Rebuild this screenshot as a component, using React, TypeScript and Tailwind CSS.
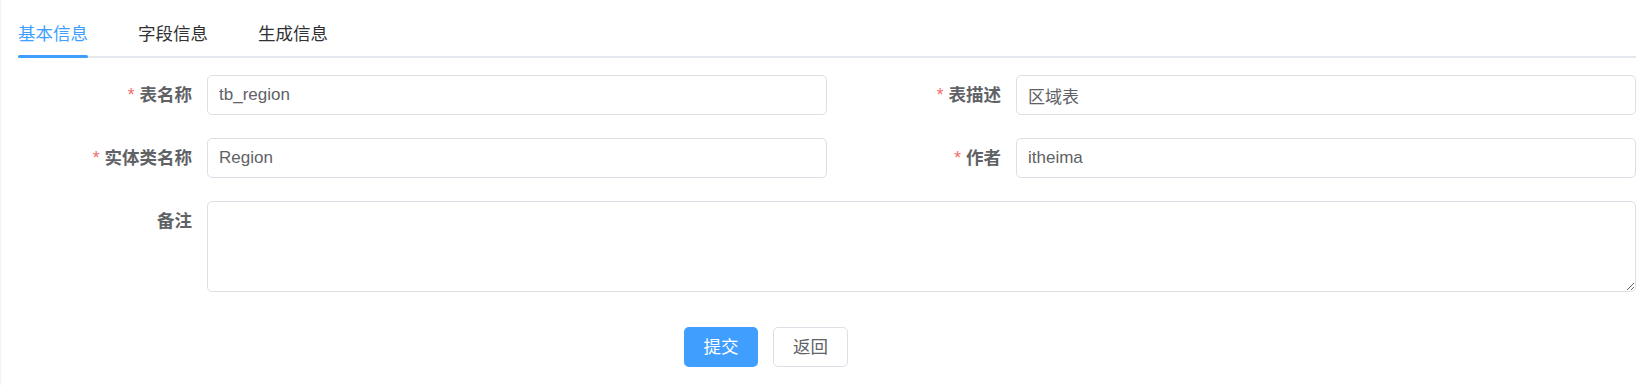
import React from "react";

export default function App() {
  const tabs = ["基本信息", "字段信息", "生成信息"];

  const Label = ({ text, required }: { text: string; required?: boolean }) => (
    <div className="w-[189px] shrink-0 pr-[15px] text-right leading-[40px] font-bold text-[#606266]">
      {required && <span className="mr-[5px] font-normal text-[#F56C6C]">*</span>}
      {text}
    </div>
  );

  const Field = ({ label, value }: { label: string; value: string }) => (
    <div className="flex items-start">
      <Label text={label} required />
      <input
        defaultValue={value}
        className="h-[40px] min-w-0 flex-1 rounded-[5px] border border-[#DCDFE6] bg-white px-[11px] text-[17px] text-[#606266] outline-none"
      />
    </div>
  );

  return (
    <div
      className="h-[385px] w-full border-l border-[#f2f2f2] bg-white pl-[17px] pr-[12px] text-[17.5px]"
      style={{ fontFamily: '"Liberation Sans", "Noto Sans CJK SC", sans-serif' }}
    >
      {/* Tabs header */}
      <div className="flex border-b-2 border-[#E4E7ED] pt-[12px]">
        {tabs.map((t, i) => (
          <div
            key={t}
            className={
              i === 0
                ? "relative flex h-[44px] items-center pr-[25px] text-[#409EFF]"
                : i === tabs.length - 1
                ? "relative flex h-[44px] items-center pl-[25px] text-[#303133]"
                : "relative flex h-[44px] items-center px-[25px] text-[#303133]"
            }
          >
            {t}
            {i === 0 && <div className="absolute bottom-[-2px] left-0 h-[3px] w-[70px] rounded-full bg-[#409EFF]" />}
          </div>
        ))}
      </div>

      {/* Form */}
      <div className="mt-[17px]">
        <div className="grid grid-cols-2">
          <Field label="表名称" value="tb_region" />
          <Field label="表描述" value="区域表" />
        </div>
        <div className="mt-[23px] grid grid-cols-2">
          <Field label="实体类名称" value="Region" />
          <Field label="作者" value="itheima" />
        </div>
        <div className="mt-[23px] flex items-start">
          <Label text="备注" />
          <textarea className="h-[91px] min-w-0 flex-1 resize-y rounded-[5px] border border-[#DCDFE6] bg-white px-[11px] py-[6px] text-[17px] text-[#606266] outline-none" />
        </div>
        <div className="mt-[35px] flex gap-[15px] pl-[666px]">
          <button className="h-[40px] w-[74px] rounded-[5px] bg-[#409EFF] text-[17.5px] text-white">提交</button>
          <button className="h-[40px] w-[75px] rounded-[5px] border border-[#DCDFE6] bg-white text-[17.5px] text-[#606266]">
            返回
          </button>
        </div>
      </div>
    </div>
  );
}
